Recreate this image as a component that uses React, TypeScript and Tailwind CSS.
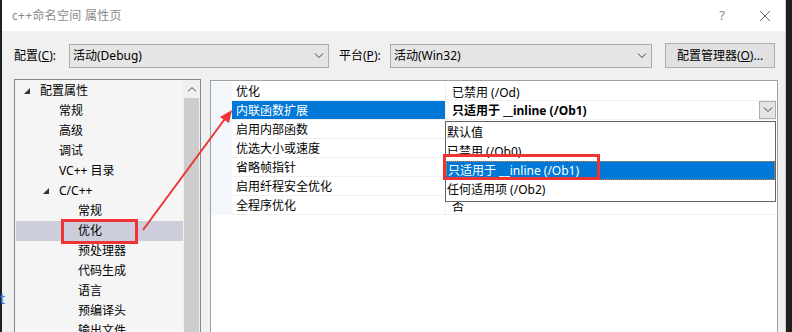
import React from "react";

const FONT = { fontFamily: '"Noto Sans", "Noto Sans CJK SC", sans-serif' };

const treeItems: { label: string; indent: number; expander?: boolean; selected?: boolean }[] = [
  { label: "配置属性", indent: 0, expander: true },
  { label: "常规", indent: 1 },
  { label: "高级", indent: 1 },
  { label: "调试", indent: 1 },
  { label: "VC++ 目录", indent: 1 },
  { label: "C/C++", indent: 1, expander: true },
  { label: "常规", indent: 2 },
  { label: "优化", indent: 2, selected: true },
  { label: "预处理器", indent: 2 },
  { label: "代码生成", indent: 2 },
  { label: "语言", indent: 2 },
  { label: "预编译头", indent: 2 },
  { label: "输出文件", indent: 2 },
];

const props: { name: string; value: string; selected?: boolean }[] = [
  { name: "优化", value: "已禁用 (/Od)" },
  { name: "内联函数扩展", value: "只适用于 __inline (/Ob1)", selected: true },
  { name: "启用内部函数", value: "" },
  { name: "优选大小或速度", value: "" },
  { name: "省略帧指针", value: "" },
  { name: "启用纤程安全优化", value: "" },
  { name: "全程序优化", value: "否" },
];

const options = ["默认值", "已禁用 (/Ob0)", "只适用于 __inline (/Ob1)", "任何适用项 (/Ob2)"];

function Chevron({ up }: { up?: boolean }) {
  return (
    <svg width="10" height="6" viewBox="0 0 10 6" className="shrink-0">
      <path
        d={up ? "M1 5.5 L5 1.5 L9 5.5" : "M1 0.5 L5 4.5 L9 0.5"}
        fill="none"
        stroke="#404040"
        strokeWidth="1"
      />
    </svg>
  );
}

function Combo({ text, width }: { text: string; width: string }) {
  return (
    <div
      className={`${width} h-[24px] border border-[#adadad] bg-[#e5e5e5] flex items-center justify-between pl-[3px] pr-[4px] text-[12px] text-black`}
    >
      <span>{text}</span>
      <Chevron />
    </div>
  );
}

export default function App() {
  return (
    <div className="relative w-[792px] h-[332px] overflow-hidden bg-[#1f1f1f]" style={FONT}>
      <div className="absolute left-0 top-[292px] text-[14px] leading-none text-[#3a7bd5]">t</div>
      <div className="ml-[2px] w-[784px] h-full flex flex-col bg-[#f0f0f0] border-r border-[#cfcfcf]">
        {/* title bar */}
        <div className="h-[31px] shrink-0 bg-white flex items-center pl-[10px] pr-[14px]">
          <span className="text-[12px] text-[#8a8a8a] tracking-[0.3px]">c++命名空间 属性页</span>
          <div className="flex-1" />
          <span className="text-[13px] text-[#8a8a8a] mr-[34px]">?</span>
          <svg width="12" height="12" viewBox="0 0 12 12">
            <path d="M1 1 L11 11 M11 1 L1 11" stroke="#6a6a6a" strokeWidth="1" />
          </svg>
        </div>

        {/* config row */}
        <div className="mt-[12px] h-[25px] flex items-center pl-[12px] text-[12px] text-black">
          <span className="w-[55px]">
            配置(<span className="underline">C</span>):
          </span>
          <Combo text="活动(Debug)" width="w-[260px]" />
          <span className="w-[51px] ml-[10px]">
            平台(<span className="underline">P</span>):
          </span>
          <Combo text="活动(Win32)" width="w-[262px]" />
          <div className="ml-[13px] w-[110px] h-[25px] border border-[#adadad] bg-[#e1e1e1] flex items-center justify-center">
            配置管理器(<span className="underline">O</span>)...
          </div>
        </div>

        {/* panels */}
        <div className="mt-[11px] flex-1 flex pl-[12px] min-h-0">
          {/* tree */}
          <div className="w-[187px] border border-[#828790] border-b-0 bg-[#f5f5f5] flex min-h-0 overflow-hidden">
            <div className="flex-1 pt-[1px] pl-[1px]">
              {treeItems.map((it, i) => (
                <div
                  key={i}
                  className={`h-[20px] flex items-center text-[12px] text-black ${it.selected ? "bg-[#cccedb]" : ""}`}
                  style={{ paddingLeft: 8 + it.indent * 19 }}
                >
                  <span className="w-[10px] flex items-center">
                    {it.expander && (
                      <svg width="6" height="6" viewBox="0 0 6 6">
                        <path d="M6 0 L6 6 L0 6 Z" fill="#333" />
                      </svg>
                    )}
                  </span>
                  <span className="ml-[6px]">{it.label}</span>
                </div>
              ))}
            </div>
            <div className="w-[17px] flex flex-col bg-[#f0f0f0]">
              <div className="h-[18px] flex items-center justify-center">
                <Chevron up />
              </div>
              <div className="flex-1 mx-[1px] bg-[#cdcdcd]" />
            </div>
          </div>

          {/* property grid */}
          <div className="relative ml-[9px] mt-[1px] w-[568px] border border-[#a0a0a0] border-b-0 bg-white pt-[1px]">
            {props.map((p, i) => (
              <div key={i} className="h-[19px] flex text-[12px] text-black">
                <div className="w-[21px] bg-[#f3f6fb]" />
                <div
                  className={`w-[213px] flex items-center pl-[4px] pt-[2px] border-b border-[#f0f0f0] ${
                    p.selected ? "bg-[#0078d7] text-white border-[#0078d7]" : ""
                  }`}
                >
                  {p.name}
                </div>
                <div
                  className={`flex-1 flex items-center pl-[6px] border-b border-l border-[#f0f0f0] ${
                    p.selected ? "font-bold" : "pt-[2px]"
                  }`}
                >
                  <span className="flex-1 pt-[1px]">{p.value}</span>
                  {p.selected && (
                    <div className="w-[17px] h-[18px] mr-[1px] border border-[#adadad] bg-[#e5e5e5] flex items-center justify-center">
                      <Chevron />
                    </div>
                  )}
                </div>
              </div>
            ))}

            {/* dropdown list */}
            <div className="absolute left-[234px] top-[40px] w-[331px] h-[81px] border border-[#646464] bg-white pt-[1px] text-[12px] text-black">
              {options.map((o, i) => (
                <div
                  key={i}
                  className={`h-[19px] flex items-center pl-[1px] ${
                    i === 2 ? "bg-[#0078d7] text-white border border-dotted border-[#e08a2a]" : ""
                  }`}
                >
                  {o}
                </div>
              ))}
            </div>
          </div>
        </div>
      </div>

      {/* annotation overlays */}
      <div className="absolute left-[61px] top-[219px] w-[77px] h-[25px] border-[3px] border-[#ee3434]" />
      <div className="absolute left-[443px] top-[154px] w-[157px] h-[26px] border-[3px] border-[#ee3434]" />
      <svg className="absolute left-0 top-0" width="792" height="332" viewBox="0 0 792 332">
        <line x1="143" y1="230" x2="227" y2="116" stroke="#ee3434" strokeWidth="2" />
        <path d="M232 110 L220 117 L229 123 Z" fill="#ee3434" />
      </svg>
    </div>
  );
}
